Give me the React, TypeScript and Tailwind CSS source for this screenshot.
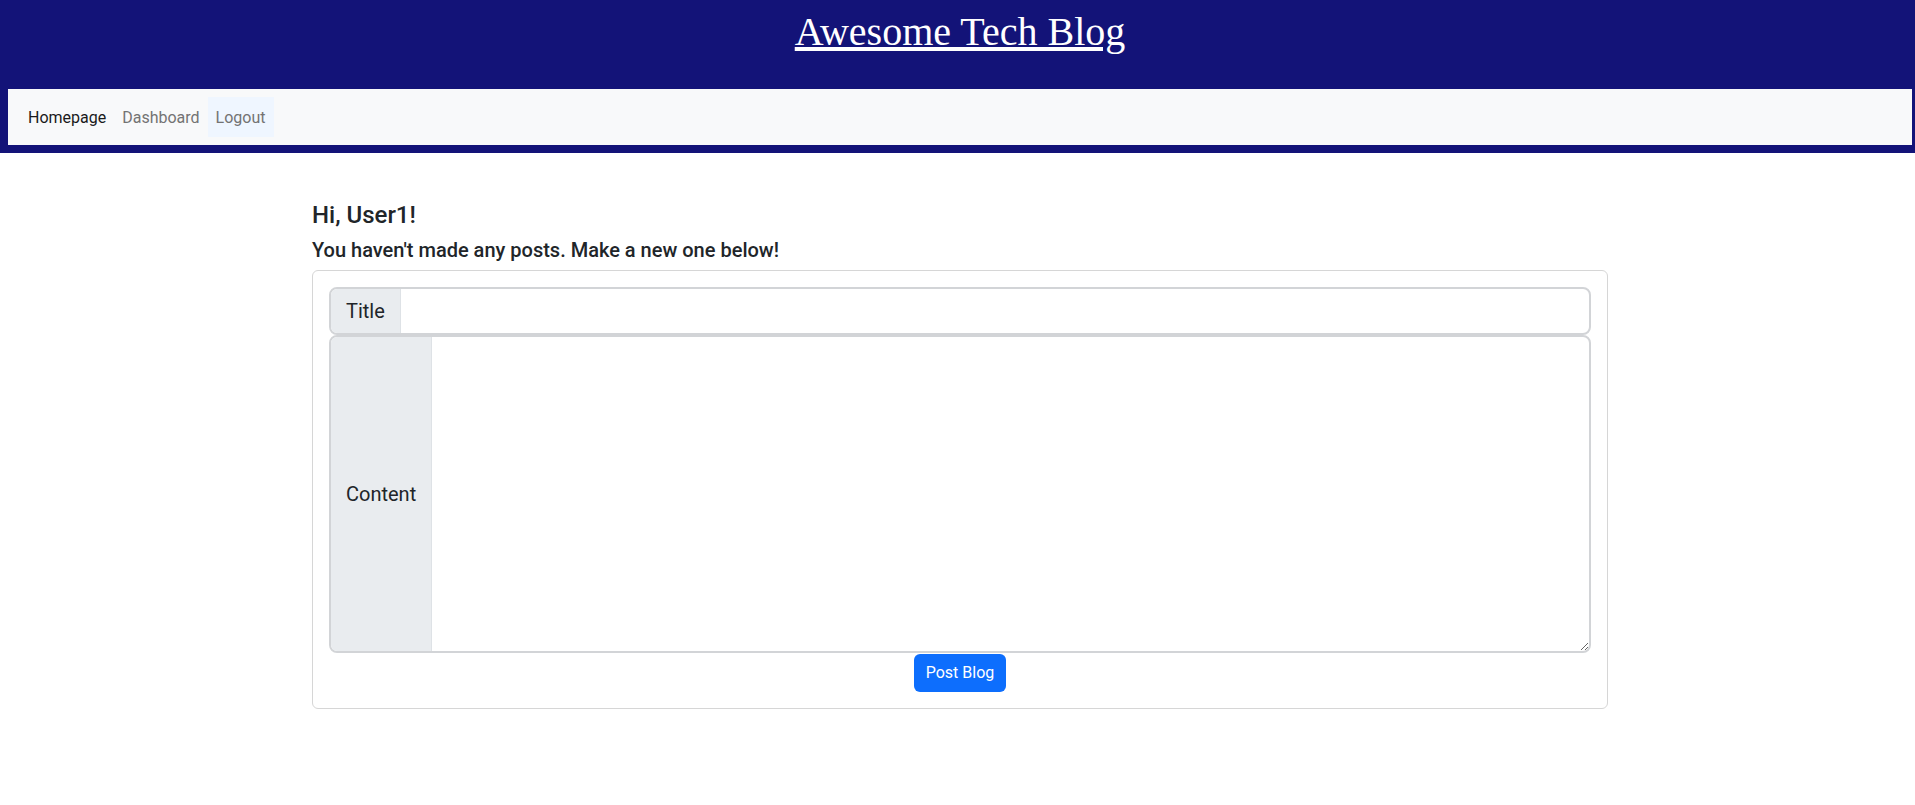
import React from 'react';

const navLinks = [
  { label: 'Homepage', active: true },
  { label: 'Dashboard', active: false },
  { label: 'Logout', active: false, focused: true },
];

const Header = () => (
  <header className="bg-[#131378] pb-2">
    <div className="h-[89px] pt-2 text-center">
      <a href="#" className="font-['Liberation_Serif',serif] text-[40px] leading-[48px] text-white underline">
        Awesome Tech Blog
      </a>
    </div>
    <nav className="mx-2 flex h-14 items-center bg-[#f8f9fa] px-3 py-2">
      {navLinks.map((link) => (
        <a
          key={link.label}
          href="#"
          className={
            'px-2 pt-[9px] pb-[7px] text-base leading-6 ' +
            (link.active ? 'text-[#1a1a1a]' : 'text-[#737373]') +
            (link.focused ? ' bg-[#eff6ff]' : '')
          }
        >
          {link.label}
        </a>
      ))}
    </nav>
  </header>
);

const PostForm = () => (
  <div className="rounded-md border border-[#d6d6d6] p-4">
    <div className="flex h-12 rounded-lg border-2 border-[#d2d4d7]">
      <span className="flex items-center rounded-l-md border-r border-[#dee2e6] bg-[#e9ecef] px-[15px] text-xl">
        Title
      </span>
      <input className="min-w-0 flex-1 rounded-r-md px-4 text-xl outline-none" />
    </div>
    <div className="flex h-[318px] rounded-lg border-2 border-[#d2d4d7]">
      <span className="flex items-center rounded-l-md border-r border-[#dee2e6] bg-[#e9ecef] px-[15px] text-xl">
        Content
      </span>
      <textarea className="min-w-0 flex-1 rounded-r-md px-4 py-2 text-xl outline-none" />
    </div>
    <div className="flex justify-center pt-px">
      <button className="h-[38px] rounded-md bg-[#0d6efd] px-3 text-base text-white">Post Blog</button>
    </div>
  </div>
);

export default function App() {
  return (
    <div className="min-h-screen w-screen overflow-hidden bg-white">
      <div className="w-[1920px] font-['Roboto','Liberation_Sans',sans-serif] text-[#212529]">
        <Header />
        <main className="mx-auto w-[1320px] px-3 pt-12">
          <h4 className="mb-2 text-2xl font-medium leading-[1.2]">Hi, User1!</h4>
          <h5 className="mb-2 text-xl font-medium leading-[1.2]">
            You haven't made any posts. Make a new one below!
          </h5>
          <PostForm />
        </main>
      </div>
    </div>
  );
}
